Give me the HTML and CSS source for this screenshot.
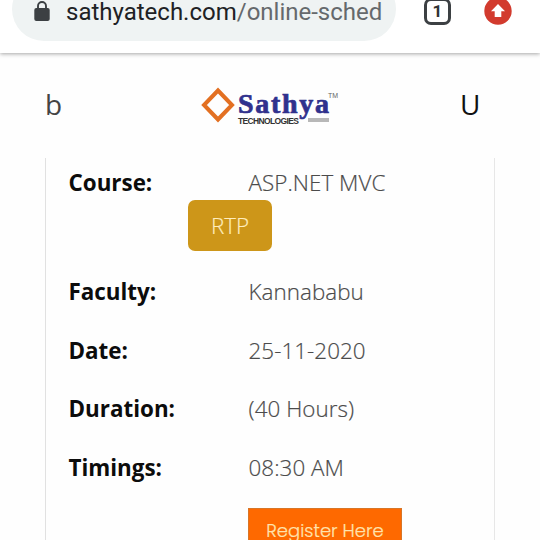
FILE: index.html
```html
<!DOCTYPE html>
<html lang="en">
<head>
<meta charset="utf-8">
<title>Sathya Technologies</title>
<link rel="stylesheet" href="styles.css">
</head>
<body>
<div class="browser-bar">
  <div class="address">
    <svg class="lock" width="16" height="22" viewBox="0 0 16 22"><path d="M4 9V6a4 4 0 0 1 8 0v3" fill="none" stroke="#3c4043" stroke-width="1.9"/><rect x="0.3" y="8" width="15.4" height="13" rx="2" fill="#3c4043"/></svg>
    <span class="url"><span class="host">sathyatech.com</span>/online-sched</span>
  </div>
  <div class="tabs">1</div>
  <svg class="update" width="28" height="28" viewBox="0 0 28 28"><circle cx="14" cy="14" r="13.7" fill="#d23b2e"/><path d="M14 7l7 7.300h-3.700V20h-6.600v-5.700H7z" fill="#fff"/></svg>
</div>
<header class="site-header">
  <span class="menu">b</span>
  <div class="logo">
    <svg class="diamond" width="34" height="36" viewBox="0 0 34 36"><path d="M17 3.500L31 18 17 32.500 3 18z" fill="none" stroke="#e37022" stroke-width="4"/></svg>
    <div class="brand">
      <span class="name">Sathya</span>
      <div class="sub"><span>TECHNOLOGIES</span><i class="dash"></i></div>
    </div>
    <span class="tm">TM</span>
  </div>
  <span class="user">U</span>
</header>
<main class="card">
  <div class="row"><b>Course:</b><span>ASP.NET MVC</span></div>
  <div class="badge">RTP</div>
  <div class="row"><b>Faculty:</b><span>Kannababu</span></div>
  <div class="row"><b>Date:</b><span>25-11-2020</span></div>
  <div class="row"><b>Duration:</b><span>(40 Hours)</span></div>
  <div class="row"><b>Timings:</b><span>08:30 AM</span></div>
  <div class="register">Register Here</div>
</main>
</body>
</html>
```
FILE: styles.css
```css
* { box-sizing: border-box; }
body { margin: 0; width: 540px; height: 540px; overflow: hidden; background: #fefefe; font-family: "Open Sans", "Noto Sans", sans-serif; }
.browser-bar { display: flex; height: 53px; background: #fff; position: relative; box-shadow: 0 1px 4px rgba(0,0,0,.35); }
.address { display: flex; width: 384px; height: 64px; margin: -23px 0 0 12px; padding: 23px 0 0 22px; border-radius: 32px; background: #eff3f3; }
.lock { flex: none; }
.url { margin: -3px 0 0 16px; font: 24px/30px Roboto, sans-serif; color: #65696c; white-space: nowrap; }
.host { color: #202124; }
.tabs { width: 27px; height: 27px; margin: -2px 0 0 28px; border: 3px solid #3c4043; border-radius: 7px; font: bold 17px/21px Roboto, sans-serif; text-align: center; color: #303234; }
.update { margin: -3px 0 0 33px; }
.site-header { display: flex; height: 105px; padding-top: 30px; }
.menu { width: 155px; padding-left: 45px; font-size: 28px; line-height: 42px; color: #444; }
.logo { display: flex; width: 305px; padding-left: 46px; }
.diamond { margin-top: 4px; }
.brand { width: 91px; margin-left: 3px; }
.name { display: block; height: 34px; font: bold 28px/42px "Liberation Serif", serif; letter-spacing: 1.700px; color: #30318d; -webkit-text-stroke: .7px #30318d; }
.sub { display: flex; font: bold 8.500px/9px "Liberation Sans", sans-serif; letter-spacing: -.65px; color: #333; }
.sub span { flex: none; width: 60px; }
.dash { flex: none; width: 21px; height: 4px; margin: 1px 0 0 10px; background: #b8b8b8; }
.tm { font: 7px/8px "Liberation Sans", sans-serif; margin: 9px 0 0 -1px; color: #666; }
.user { font-size: 28px; line-height: 42px; color: #111; }
.card { width: 450px; height: 382px; margin-left: 45px; padding: 9px 0 0 22.500px; border-left: 1px solid #e1e1e1; border-right: 1px solid #e7e7e7; }
.row { display: flex; height: 30px; margin-bottom: 28.500px; font-size: 22.400px; line-height: 31px; color: #4b4b4b; }
.row:first-child { margin-bottom: 3px; }
.row b { width: 180px; color: #0c0c0c; font-weight: 700; }
.row span { font-weight: 300; letter-spacing: .05px; white-space: nowrap; -webkit-text-stroke: .2px #4b4b4b; }
.badge { width: 84px; height: 51px; margin: 0 0 25px 119.500px; border-radius: 7px; background: #cd9619; color: #ffedbd; font-size: 22.400px; font-weight: 300; line-height: 52px; text-align: center; -webkit-text-stroke: .2px #ffedbd; }
.register { width: 154px; height: 50px; margin: -2px 0 0 179.500px; border: 1px solid #d77628; background: #fe6900; color: #ffe3ae; font: 300 18px/44px Poppins, "Open Sans", sans-serif; text-align: center; -webkit-text-stroke: .2px #ffe3ae; }
```
